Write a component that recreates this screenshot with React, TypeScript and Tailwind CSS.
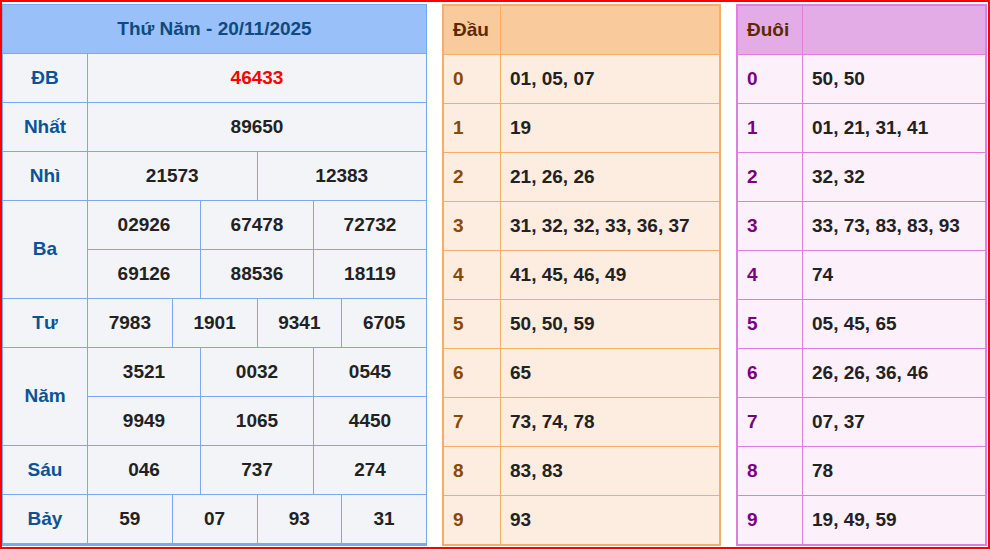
import React from "react";

const F = { fontFamily: '"Liberation Sans", Arial, sans-serif' };

function Cells({ vals, red }: { vals: string[]; red?: boolean }) {
  return (
    <div className="flex flex-1 h-full">
      {vals.map((v, i) => (
        <div key={i} className={`flex-1 flex items-center justify-center ${i > 0 ? "border-l border-[#78aaf0]" : ""} ${red ? "text-[#ff0000]" : "text-[#222]"}`}>{v}</div>
      ))}
    </div>
  );
}

function Row({ label, rows, red }: { label: string; rows: string[][]; red?: boolean }) {
  return (
    <div className="flex border-t border-[#78aaf0]">
      <div className="w-[85px] shrink-0 flex items-center justify-center text-[#0b5394] border-r border-[#78aaf0]">{label}</div>
      <div className="flex-1 flex flex-col">
        {rows.map((r, i) => (
          <div key={i} className={`h-[48px] ${i > 0 ? "border-t border-[#78aaf0] h-[49px]" : ""}`}>
            <Cells vals={r} red={red} />
          </div>
        ))}
      </div>
    </div>
  );
}

const dau = ["01, 05, 07", "19", "21, 26, 26", "31, 32, 32, 33, 36, 37", "41, 45, 46, 49", "50, 50, 59", "65", "73, 74, 78", "83, 83", "93"];
const duoi = ["50, 50", "01, 21, 31, 41", "32, 32", "33, 73, 83, 83, 93", "74", "05, 45, 65", "26, 26, 36, 46", "07, 37", "78", "19, 49, 59"];

function Side({ title, data, c }: { title: string; data: string[]; c: "o" | "p" }) {
  const o = c === "o";
  const bd = o ? "border-[#f5ad68]" : "border-[#e07ee0]";
  return (
    <div className={`border-2 ${bd} ${o ? "w-[279px] bg-[#fdede1]" : "w-[251px] bg-[#fcf0fa]"} flex flex-col`}>
      <div className={`flex h-[48px] ${o ? "bg-[#f9ca9c]" : "bg-[#e4acE6]"} text-[#5a2a00]`}>
        <div className={`${o ? "w-[57px]" : "w-[65px]"} border-r ${bd} flex items-center pl-[9px]`}>{title}</div>
        <div className="flex-1" />
      </div>
      {data.map((d, i) => (
        <div key={i} className={`flex h-[49px] border-t ${bd}`}>
          <div className={`${o ? "w-[57px] text-[#8b4800]" : "w-[65px] text-[#7a0080]"} border-r ${bd} flex items-center pl-[9px]`}>{i}</div>
          <div className="flex-1 flex items-center pl-[9px] text-[#222]">{d}</div>
        </div>
      ))}
    </div>
  );
}

export default function App() {
  return (
    <div style={F} className="w-[990px] h-[549px] border-2 border-[#ff0000] bg-white font-bold text-[19px] flex items-start pt-[2px] gap-[15px]">
      <div className="w-[425px] border border-[#78aaf0] border-b-[3px] bg-[#f3f4f8]">
        <div className="h-[48px] bg-[#9ac0fa] flex items-center justify-center text-[#0e4a80]">Thứ Năm - 20/11/2025</div>
        <Row label="ĐB" rows={[["46433"]]} red />
        <Row label="Nhất" rows={[["89650"]]} />
        <Row label="Nhì" rows={[["21573", "12383"]]} />
        <Row label="Ba" rows={[["02926", "67478", "72732"], ["69126", "88536", "18119"]]} />
        <Row label="Tư" rows={[["7983", "1901", "9341", "6705"]]} />
        <Row label="Năm" rows={[["3521", "0032", "0545"], ["9949", "1065", "4450"]]} />
        <Row label="Sáu" rows={[["046", "737", "274"]]} />
        <Row label="Bảy" rows={[["59", "07", "93", "31"]]} />
      </div>
      <Side title="Đầu" data={dau} c="o" />
      <Side title="Đuôi" data={duoi} c="p" />
    </div>
  );
}
